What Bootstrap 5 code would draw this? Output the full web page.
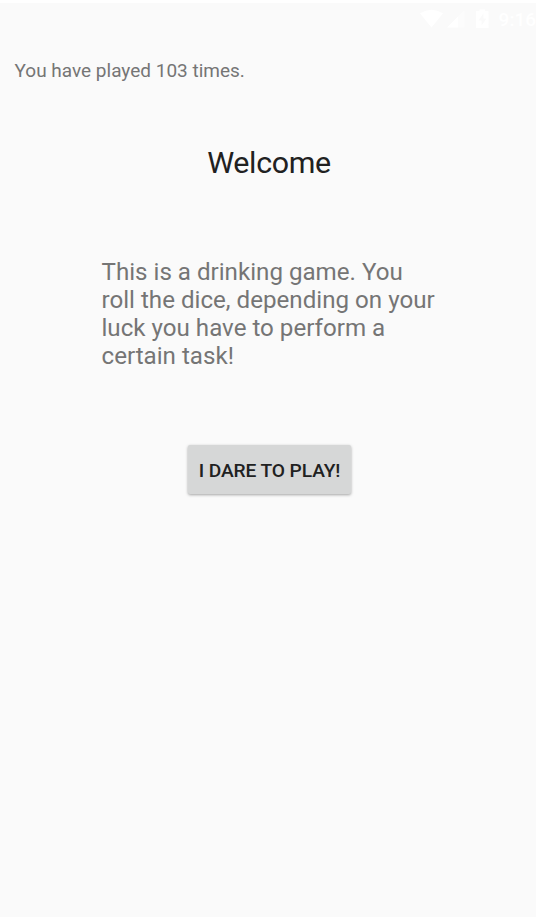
<!DOCTYPE html>
<html lang="en">
<head>
<meta charset="utf-8">
<meta name="viewport" content="width=device-width, initial-scale=1">
<title>Welcome</title>
<link href="https://cdn.jsdelivr.net/npm/bootstrap@5.3.0/dist/css/bootstrap.min.css" rel="stylesheet">
<style>
body { font-family: Roboto, sans-serif; background: #fafafa; color: #757575; }
.screen { height: 917px; border-top: 3px solid #fff; }
.status-bar { height: 32px; color: #fff; font-size: 19px; font-weight: 500; line-height: 34px; }
.status-icons { width: 84px; height: 32px; }
.play-count { font-size: 19px; line-height: 22px; margin: 25px 0 0 14.5px; }
.welcome { font-size: 30.4px; letter-spacing: -.35px; line-height: 36px; margin-top: 63px; color: #212121; font-weight: 400; padding-left: 2px; }
.intro { width: 335px; font-size: 24.15px; line-height: 28px; margin: 77px 0 0 101.5px; white-space: nowrap; }
.btn-dare { width: 163px; height: 49px; margin: 75px 0 0 188px; padding: 1px 0 0; border: 0; border-radius: 2px; background: #d6d7d7; color: #212121; font-size: 19.2px; letter-spacing: -.1px; font-weight: 500; line-height: 50px; box-shadow: 0 1px 3px rgba(0,0,0,.35); white-space: nowrap; }
</style>
</head>
<body>
<main class="screen d-flex flex-column align-items-start overflow-hidden">
  <div class="status-bar w-100 d-flex justify-content-end">
    <svg class="status-icons" viewBox="0 0 84 32" fill="#fff" aria-hidden="true">
      <path d="M5 10.300Q16.500 3 28 10.300L16.500 24.500Z"/>
      <path d="M32 24.500L49.500 7V24.500Z" opacity=".4"/>
      <path d="M32 24.500L43 13.500V24.500Z"/>
      <path fill-rule="evenodd" d="M61.500 8H64.500V6.500H70V8H73Q73.500 8 73.500 9V25H61V9Q61 8 61.500 8ZM68.500 10L63.500 17.500H66.500V22.500L71.500 15.500H68.500Z"/>
    </svg>
    <span>9:16</span>
  </div>
  <p class="play-count mb-0">You have played 103 times.</p>
  <h1 class="welcome w-100 text-center mb-0">Welcome</h1>
  <p class="intro mb-0">This is a drinking game. You<br>roll the dice, depending on your<br>luck you have to perform a<br>certain task!</p>
  <button type="button" class="btn btn-dare text-uppercase">I dare to play!</button>
</main>
<script src="https://cdn.jsdelivr.net/npm/bootstrap@5.3.0/dist/js/bootstrap.bundle.min.js"></script>
</body>
</html>
